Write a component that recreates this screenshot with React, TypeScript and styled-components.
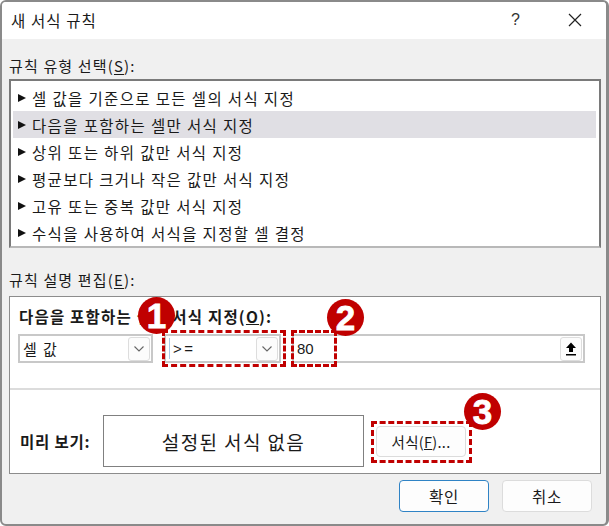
import styled, { createGlobalStyle } from "styled-components";

const rules = [
  "셀 값을 기준으로 모든 셀의 서식 지정",
  "다음을 포함하는 셀만 서식 지정",
  "상위 또는 하위 값만 서식 지정",
  "평균보다 크거나 작은 값만 서식 지정",
  "고유 또는 중복 값만 서식 지정",
  "수식을 사용하여 서식을 지정할 셀 결정",
];

const GlobalStyle = createGlobalStyle`
  html, body {
    margin: 0;
    padding: 0;
    background: #ffffff;
  }
  body {
    font-family: "Noto Sans CJK KR", "Noto Sans", sans-serif;
    color: #1a1a1a;
  }
`;

const Dialog = styled.div`
  position: relative;
  box-sizing: border-box;
  width: 609px;
  height: 526px;
  background: #f0f0f0;
  border: 2px solid #8a8a8a;
  border-right-width: 3px;
  border-radius: 6px;
  overflow: hidden;
`;

const TitleBar = styled.div`
  height: 37px;
  background: #ffffff;
  display: flex;
  align-items: center;
  padding: 0 24px 0 9px;
`;

const Title = styled.div`
  flex: 1;
  font-size: 15.5px;
  letter-spacing: 1.1px;
  margin-top: -2px;
`;

const Help = styled.span`
  font-family: "Liberation Sans", sans-serif;
  font-size: 16px;
  margin-right: 48px;
  margin-top: -2px;
  color: #333;
`;

const Close = styled.svg`
  margin-top: -2px;
`;

const Body = styled.div`
  display: flex;
  flex-direction: column;
  padding: 15px 5px 0 7px;
`;

const SectionLabel = styled.div`
  height: 25px;
  font-size: 15px;
  line-height: 24px;
  letter-spacing: 1.15px;
  u {
    text-underline-offset: 2px;
  }
`;

const ListBox = styled.div`
  box-sizing: border-box;
  height: 169px;
  background: #ffffff;
  border: 2px solid #7a7a7a;
  border-bottom-color: #b8b8b8;
  padding: 3px 3px 0 2px;
`;

const RuleRow = styled.div<{ $selected?: boolean }>`
  height: 27px;
  display: flex;
  align-items: center;
  gap: 6px;
  padding-left: 5px;
  font-size: 15.5px;
  letter-spacing: 1.35px;
  background: ${(p) => (p.$selected ? "#e0dfe4" : "transparent")};
`;

const Arrow = styled.span`
  width: 0;
  height: 0;
  border-left: 8px solid #111;
  border-top: 4px solid transparent;
  border-bottom: 4px solid transparent;
`;

const EditLabel = styled(SectionLabel)`
  margin-top: 20px;
  height: 28px;
`;

const EditBox = styled.div`
  box-sizing: border-box;
  height: 178px;
  background: #ffffff;
  border: 1px solid #8c8c8c;
  display: flex;
  flex-direction: column;
`;

const ConditionArea = styled.div`
  box-sizing: border-box;
  height: 93px;
  padding: 7px 14px 0 8px;
  border-bottom: 2px solid #dcdcdc;
`;

const ConditionTitle = styled.div`
  height: 30px;
  padding-left: 1px;
  font-size: 15.5px;
  font-weight: 700;
  line-height: 24px;
  letter-spacing: 1.2px;
  white-space: nowrap;
`;

const Controls = styled.div`
  display: flex;
  gap: 11px;
`;

const Field = styled.div<{ $width: number }>`
  box-sizing: border-box;
  flex: 0 0 ${(p) => p.$width}px;
  height: 29px;
  border: 2px solid #c8c8c8;
  background: #ffffff;
  display: flex;
  align-items: center;
  padding: 0 1px 0 3px;
  font-size: 15px;
`;

const FieldText = styled.span`
  flex: 1;
  letter-spacing: 1.4px;
`;

const Caret = styled.span`
  width: 1px;
  height: 21px;
  margin-right: 3px;
  background: #a9cbe8;
`;

const OperatorText = styled(FieldText)`
  font-family: "Liberation Sans", sans-serif;
  font-size: 15px;
  letter-spacing: 2.5px;
`;

const NumberText = styled(FieldText)`
  font-family: "Liberation Sans", sans-serif;
  font-size: 15px;
  letter-spacing: 0;
`;

const FieldButton = styled.span`
  box-sizing: border-box;
  width: 22px;
  height: 24px;
  border: 1px solid #dddddd;
  border-radius: 3px;
  display: flex;
  align-items: center;
  justify-content: center;
  background: #fcfcfc;
`;

const PreviewArea = styled.div`
  flex: 1;
  display: flex;
  align-items: center;
  padding: 19px 0 0 10px;
`;

const PreviewLabel = styled.div`
  width: 83px;
  font-size: 15.5px;
  font-weight: 700;
  letter-spacing: 0.8px;
`;

const PreviewBox = styled.div`
  box-sizing: border-box;
  width: 261px;
  height: 52px;
  border: 1px solid #808080;
  display: flex;
  align-items: center;
  justify-content: center;
  font-size: 19px;
  letter-spacing: 1.4px;
`;

const Button = styled.button<{ $primary?: boolean }>`
  box-sizing: border-box;
  width: 90px;
  height: 32px;
  background: #fdfdfd;
  border: ${(p) => (p.$primary ? "1px solid #2f83c5" : "1px solid #dcdcdc")};
  border-radius: 4px;
  font-family: inherit;
  font-size: 15.5px;
  color: #1a1a1a;
  letter-spacing: 0.8px;
  padding: 0;
`;

const FormatButton = styled(Button)`
  margin-left: 12px;
  height: 31px;
  font-size: 14.5px;
  letter-spacing: 0.3px;
`;

const Footer = styled.div`
  display: flex;
  justify-content: flex-end;
  gap: 13px;
  padding: 6px 9px 0 0;
`;

const Badge = styled.div<{ $x: number; $y: number }>`
  position: absolute;
  left: ${(p) => p.$x - 2}px;
  top: ${(p) => p.$y - 2}px;
  width: 37px;
  height: 37px;
  border-radius: 50%;
  background: #c00000;
  color: #ffffff;
  font-family: "Liberation Sans", sans-serif;
  font-weight: 700;
  font-size: 35px;
  line-height: 37px;
  text-align: center;
  -webkit-text-stroke: 0.8px #ffffff;
`;

const Dashed = styled.div<{ $x: number; $y: number; $w: number; $h: number }>`
  position: absolute;
  box-sizing: border-box;
  left: ${(p) => p.$x - 2}px;
  top: ${(p) => p.$y - 2}px;
  width: ${(p) => p.$w}px;
  height: ${(p) => p.$h}px;
  border: 3px dashed #c00000;
`;

function Chevron() {
  return (
    <svg width="12" height="8" viewBox="0 0 12 8">
      <path d="M1.5 1.5 L6 6 L10.5 1.5" fill="none" stroke="#666" strokeWidth="1.1" />
    </svg>
  );
}

function UploadGlyph() {
  return (
    <svg width="12" height="14" viewBox="0 0 12 14">
      <path d="M6 0.5 L11 6 H8 V10 H4 V6 H1 Z M1 12 H11 V13.5 H1 Z" fill="#000" />
    </svg>
  );
}

export default function App() {
  return (
    <>
      <GlobalStyle />
      <Dialog>
        <TitleBar>
          <Title>새 서식 규칙</Title>
          <Help>?</Help>
          <Close width="14" height="14" viewBox="0 0 14 14">
            <path d="M1 1 L13 13 M13 1 L1 13" stroke="#222" strokeWidth="1.2" />
          </Close>
        </TitleBar>
        <Body>
          <SectionLabel>
            규칙 유형 선택(<u>S</u>):
          </SectionLabel>
          <ListBox>
            {rules.map((rule, i) => (
              <RuleRow key={rule} $selected={i === 1}>
                <Arrow />
                {rule}
              </RuleRow>
            ))}
          </ListBox>
          <EditLabel>
            규칙 설명 편집(<u>E</u>):
          </EditLabel>
          <EditBox>
            <ConditionArea>
              <ConditionTitle>
                다음을 포함하는 셀만 서식 지정(<u>O</u>):
              </ConditionTitle>
              <Controls>
                <Field $width={135}>
                  <FieldText>셀 값</FieldText>
                  <FieldButton>
                    <Chevron />
                  </FieldButton>
                </Field>
                <Field $width={117}>
                  <Caret />
                  <OperatorText>&gt;=</OperatorText>
                  <FieldButton>
                    <Chevron />
                  </FieldButton>
                </Field>
                <Field $width={293}>
                  <NumberText>80</NumberText>
                  <FieldButton>
                    <UploadGlyph />
                  </FieldButton>
                </Field>
              </Controls>
            </ConditionArea>
            <PreviewArea>
              <PreviewLabel>미리 보기:</PreviewLabel>
              <PreviewBox>설정된 서식 없음</PreviewBox>
              <FormatButton>
                서식(<u>F</u>)...
              </FormatButton>
            </PreviewArea>
          </EditBox>
          <Footer>
            <Button $primary>확인</Button>
            <Button>취소</Button>
          </Footer>
        </Body>
        <Dashed $x={162} $y={330} $w={124} $h={37} />
        <Dashed $x={291} $y={330} $w={46} $h={37} />
        <Dashed $x={371} $y={421} $w={101} $h={42} />
        <Badge $x={138} $y={297}>1</Badge>
        <Badge $x={327} $y={299}>2</Badge>
        <Badge $x={464} $y={393}>3</Badge>
      </Dialog>
    </>
  );
}
